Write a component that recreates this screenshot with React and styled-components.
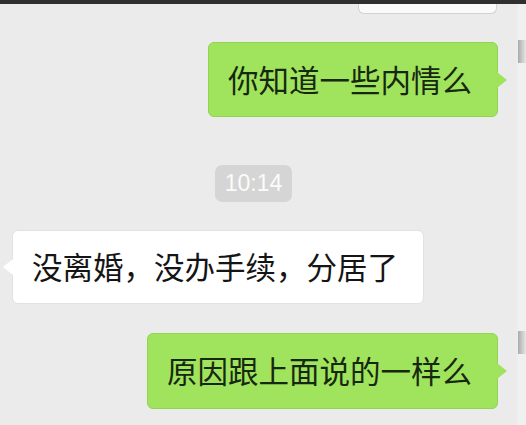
import React from "react";
import styled, { createGlobalStyle, css } from "styled-components";

const Global = createGlobalStyle`
  html, body { margin: 0; padding: 0; background: #ebebeb; }
  body { font-family: "Noto Sans CJK SC", "Noto Sans", sans-serif; }
`;

const Page = styled.div`
  width: 526px;
  height: 425px;
  overflow: hidden;
  display: flex;
  flex-direction: column;
  background: linear-gradient(to right, #ebebeb 0, #ebebeb 517px, #f0f0f0 518px, #f0f0f0 100%);
`;

const TopStrip = styled.div`
  height: 4px;
  background: #2f2f2f;
  flex-shrink: 0;
`;

const PeekRow = styled.div`
  display: flex;
  justify-content: flex-end;
  padding-right: 29px;
  height: 10px;
  flex-shrink: 0;
`;

const PeekBubble = styled.div`
  width: 137px;
  height: 9px;
  background: #fafafa;
  border: 1px solid #d2d2d2;
  border-top: none;
  border-radius: 0 0 6px 6px;
`;

const Row = styled.div`
  display: flex;
  align-items: flex-start;
  flex-shrink: 0;
  margin-top: ${(p) => p.$top}px;
  ${(p) =>
    p.$out
      ? css`
          justify-content: flex-end;
          gap: 20px;
        `
      : css`
          justify-content: flex-start;
          padding-left: 12px;
        `}
`;

const Bubble = styled.div`
  position: relative;
  box-sizing: border-box;
  height: ${(p) => p.$h}px;
  display: flex;
  align-items: center;
  padding: 0 25px 1px 19px;
  border-radius: 6px;
  font-size: 30.5px;
  line-height: 1;
  white-space: nowrap;
  ${(p) =>
    p.$out
      ? css`
          background: #a0e35c;
          border: 1px solid #92d452;
          color: #172810;
        `
      : css`
          background: #ffffff;
          border: 1px solid #e2e2e2;
          color: #151515;
        `}

  &::after {
    content: "";
    position: absolute;
    top: 50%;
    transform: translateY(-50%);
    width: 0;
    height: 0;
    border-top: 8px solid transparent;
    border-bottom: 8px solid transparent;
    ${(p) =>
      p.$out
        ? css`
            right: -10px;
            border-left: 10px solid #a0e35c;
          `
        : css`
            left: -10px;
            border-right: 10px solid #ffffff;
          `}
  }
`;

const Avatar = styled.div`
  width: 8px;
  height: 23px;
  margin-top: -2px;
  background: linear-gradient(to right, #a9a9a9, #c9c9c9 50%, #e6e6e6);
  flex-shrink: 0;
`;

const TimeRow = styled.div`
  display: flex;
  justify-content: center;
  padding-right: 19px;
  margin-top: 48px;
  flex-shrink: 0;
`;

const TimeChip = styled.div`
  height: 37px;
  width: 77px;
  box-sizing: border-box;
  display: flex;
  align-items: center;
  justify-content: center;
  background: #d5d5d5;
  border-radius: 7px;
  color: #fbfbfb;
  font-family: "Liberation Sans", Arial, sans-serif;
  font-size: 23px;
`;

export default function App() {
  return (
    <>
      <Global />
      <Page>
        <TopStrip />
        <PeekRow>
          <PeekBubble />
        </PeekRow>
        <Row $out $top={28}>
          <Bubble $out $h={75}>你知道一些内情么</Bubble>
          <Avatar />
        </Row>
        <TimeRow>
          <TimeChip>10:14</TimeChip>
        </TimeRow>
        <Row $top={28}>
          <Bubble $h={74}>没离婚，没办手续，分居了</Bubble>
        </Row>
        <Row $out $top={29}>
          <Bubble $out $h={76}>原因跟上面说的一样么</Bubble>
          <Avatar />
        </Row>
      </Page>
    </>
  );
}
